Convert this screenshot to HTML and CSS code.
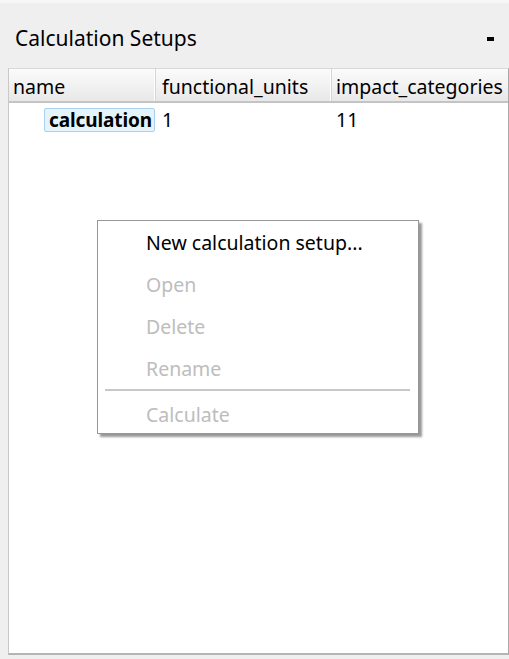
FILE: index.html
```html
<!DOCTYPE html>
<html>
<head>
<meta charset="utf-8">
<link rel="stylesheet" href="styles.css">
</head>
<body>
<div class="topstrip"></div>
<div class="panel">
  <div class="panel-head">
    <span class="title">Calculation Setups</span>
    <span class="collapse"></span>
  </div>
  <div class="table">
    <div class="thead">
      <div class="th c1">name</div>
      <div class="th c2">functional_units</div>
      <div class="th c3">impact_categories</div>
    </div>
    <div class="tr">
      <div class="td c1"><span class="cell-sel">calculation</span></div>
      <div class="td c2">1</div>
      <div class="td c3">11</div>
    </div>
  </div>
</div>
<div class="menu">
  <div class="mi">New calculation setup...</div>
  <div class="mi dis">Open</div>
  <div class="mi dis">Delete</div>
  <div class="mi dis">Rename</div>
  <div class="sep"></div>
  <div class="mi dis">Calculate</div>
</div>
</body>
</html>
```
FILE: styles.css
```css
html, body {
  margin: 0;
  padding: 0;
  background: #efefef;
  font-family: "Noto Sans", "Open Sans", sans-serif;
  color: #000;
  width: 509px;
  height: 659px;
  overflow: hidden;
}
.topstrip {
  height: 3px;
  background: #f7f7f7;
}
.panel {
  display: flex;
  flex-direction: column;
  height: 656px;
}
.panel-head {
  height: 65px;
  display: flex;
  align-items: center;
  justify-content: space-between;
  padding: 0 15px 0 15px;
  box-sizing: border-box;
}
.title {
  font-size: 21px;
  line-height: 26px;
  margin-top: 4px;
}
.collapse {
  width: 7px;
  height: 4px;
  background: #000;
  margin-top: 6px;
}
.table {
  margin-left: 8px;
  height: 587px;
  background: #fff;
  border-top: 1px solid #d8d8d8;
  border-left: 1px solid #c8c8c8;
  border-right: 1px solid #a8a8a8;
  border-bottom: 2px solid #b4b4b4;
  box-sizing: border-box;
}
.thead {
  display: flex;
  height: 34px;
  background: linear-gradient(#fbfbfb, #f0f0f0 60%, #e8e8e8);
  border-bottom: 2px solid #c4c4c4;
  box-sizing: border-box;
}
.th {
  font-size: 19.5px;
  line-height: 28px;
  padding-top: 4px;
  padding-left: 4px;
  box-sizing: border-box;
  border-right: 1px solid #d6d6d6;
  box-shadow: inset -1px 0 0 #fff;
  white-space: nowrap;
  overflow: hidden;
}
.th.c2 { padding-left: 6px; }
.th.c3 { border-right: none; box-shadow: none; }
.c1 { width: 147px; flex: none; }
.c2 { width: 176px; flex: none; }
.c3 { flex: 1; min-width: 0; }
.tr {
  display: flex;
  height: 31px;
  align-items: center;
  padding-top: 2px;
  box-sizing: border-box;
}
.td {
  font-size: 19.5px;
  line-height: 24px;
  padding-left: 4px;
  box-sizing: border-box;
  white-space: nowrap;
}
.td.c1 { padding-left: 35px; }
.td.c2 { padding-left: 6px; }
.td.c3 { padding-left: 4px; }
.cell-sel {
  display: inline-block;
  font-weight: bold;
  font-size: 19px;
  background: #e5f3fb;
  border: 1px solid #a9d2ee;
  border-radius: 2px;
  padding: 0 2px 0 4px;
  line-height: 22px;
  letter-spacing: -0.1px;
}
.menu {
  position: absolute;
  left: 97px;
  top: 220px;
  width: 322px;
  height: 214px;
  box-sizing: border-box;
  background: #fff;
  border: 1px solid #979797;
  box-shadow: 3px 3px 2px rgba(0,0,0,0.4);
  padding-top: 10px;
}
.mi {
  font-size: 19.5px;
  line-height: 24px;
  height: 42px;
  padding-left: 48px;
  box-sizing: border-box;
  white-space: nowrap;
}
.mi.dis { color: #bdbdbd; }
.sep {
  height: 2px;
  background: #c8c8c8;
  margin: -10px 8px 12px 7px;
}
```
